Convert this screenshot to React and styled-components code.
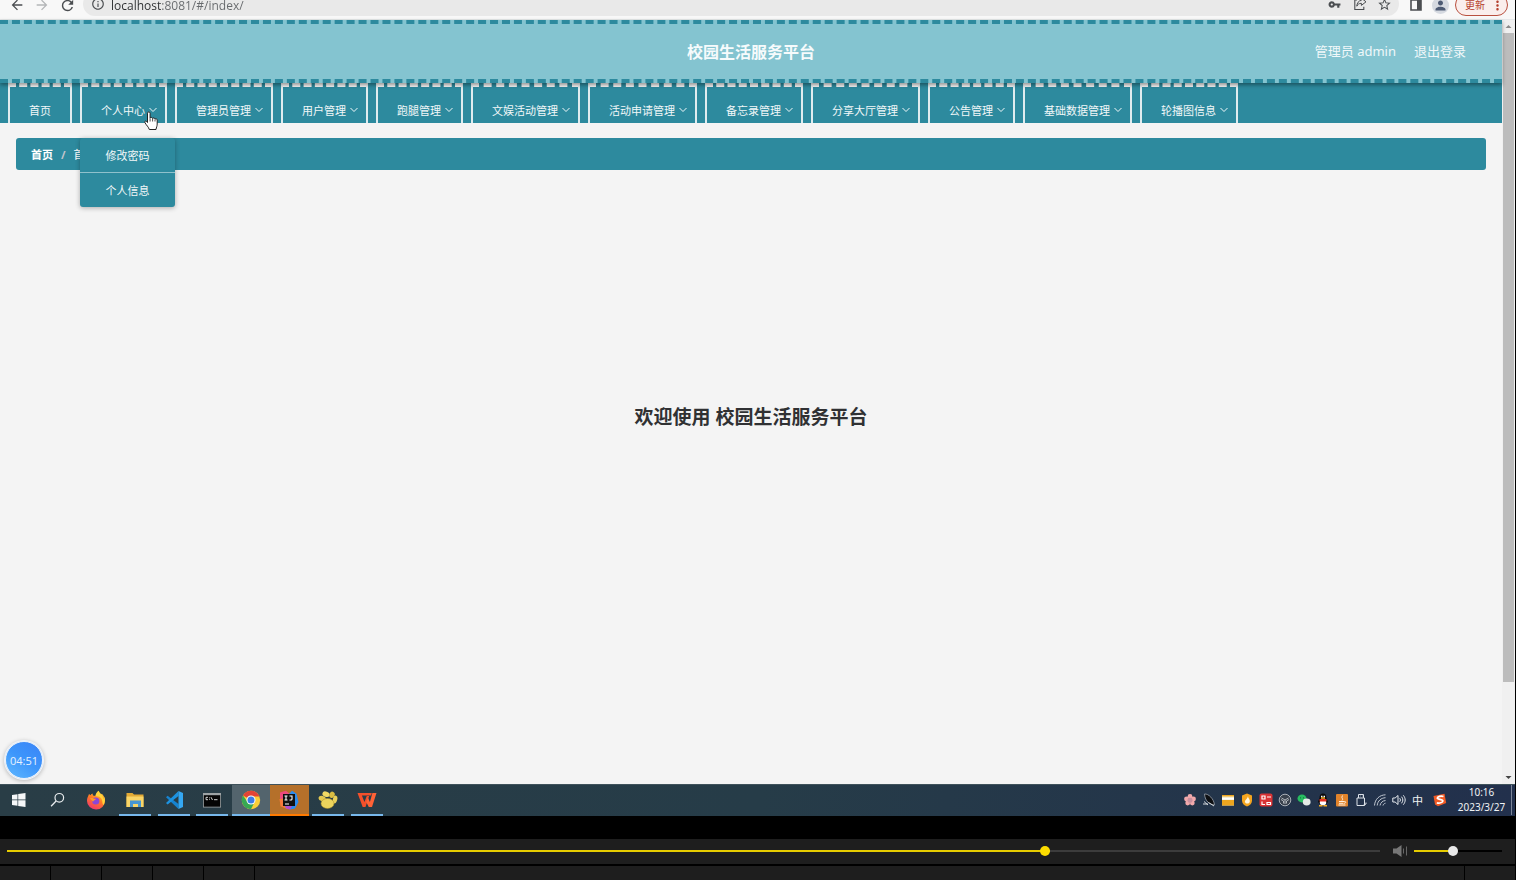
import React from "react";
import styled, { createGlobalStyle, css } from "styled-components";
import {
  MdArrowBack,
  MdArrowForward,
  MdRefresh,
  MdInfoOutline,
  MdVpnKey,
  MdStarBorder,
  MdPerson,
  MdMoreVert,
} from "react-icons/md";

const teal = "#2d8a9e";
const lightTeal = "#84c4d0";
const uiFont = `"Open Sans", "Noto Sans CJK SC", sans-serif`;

const GlobalStyle = createGlobalStyle`
  *, *::before, *::after { box-sizing: border-box; }
  body {
    margin: 0;
    background: #000;
    font-family: "Noto Sans", "Noto Sans CJK SC", sans-serif;
    font-size: 11px;
  }
  button, input { font: inherit; }
  button { border: 0; padding: 0; background: none; color: inherit; }
  a { color: inherit; text-decoration: none; }
  ul, ol { list-style: none; margin: 0; padding: 0; }
  svg { display: block; flex: none; }
`;

const Screen = styled.div`
  min-height: 100vh;
  display: flex;
  flex-direction: column;
`;

const Desktop = styled.div`
  flex: 1;
  display: flex;
  flex-direction: column;
  margin-right: 1px;
`;

/* Browser toolbar */

const Toolbar = styled.div`
  height: 20px;
  overflow: hidden;
  display: flex;
  align-items: flex-end;
  background: #f8f8f8;
  border-bottom: 1px solid #e4e8e9;
`;

const ToolbarRow = styled.div`
  flex: 1;
  height: 28px;
  display: flex;
  align-items: center;
  padding: 0 7px 0 8px;
  color: #4b4e51;
`;

const ToolButton = styled.button`
  width: ${(p) => p.$width || 25}px;
  height: 24px;
  display: flex;
  align-items: center;
  justify-content: center;
  color: ${(p) => (p.$muted ? "#b4b6b8" : "inherit")};
`;

const AddressBar = styled.div`
  flex: 1;
  height: 24px;
  margin: 0 4px 2px 6px;
  padding: 0 2px 0 8px;
  border-radius: 12px;
  background: #e9e9e9;
  display: flex;
  align-items: center;
  gap: 6px;
`;

const AddressInput = styled.input`
  flex: 1;
  min-width: 0;
  height: 20px;
  padding: 2px 0 0;
  border: 0;
  outline: 0;
  font-family: ${uiFont};
  font-size: 12px;
  color: #55585b;
  background: linear-gradient(90deg, #2c2e30 50px, #66696c 50px);
  background-clip: text;
  -webkit-text-fill-color: transparent;
`;

const Avatar = styled.span`
  width: 17px;
  height: 17px;
  border-radius: 50%;
  background: #d5d9e0;
  color: #4d5a73;
  display: flex;
  align-items: center;
  justify-content: center;
`;

const UpdateButton = styled.button`
  width: 53px;
  height: 22px;
  margin-left: 2px;
  padding: 0 2px 0 9px;
  border: 1px solid #b9503f;
  border-radius: 11px;
  background: #faeeec;
  color: #b5402e;
  font-size: 10px;
  line-height: 10px;
  display: flex;
  align-items: center;
  justify-content: space-between;
`;

/* Page inside the browser */

const Viewport = styled.div`
  flex: 1;
  display: flex;
  position: relative;
  background: #f4f4f4;
`;

const Page = styled.div`
  flex: 1;
  min-width: 0;
  display: flex;
  flex-direction: column;
`;

const Header = styled.header`
  position: relative;
  z-index: 1;
  height: 63px;
  padding: 0 36px 2px;
  border: 0 dashed ${teal};
  border-width: 4px 0;
  background: ${lightTeal};
  box-shadow: 0 2px 4px rgba(0, 0, 0, 0.4);
  color: #fff;
  display: grid;
  grid-template-columns: 1fr auto 1fr;
  align-items: center;
`;

const Title = styled.h1`
  grid-column: 2;
  margin: 0;
  font-size: 16px;
  font-weight: 700;
  color: #f6fbfc;
`;

const UserArea = styled.div`
  display: flex;
  justify-content: flex-end;
  gap: 18px;
  font-size: 13px;
  color: #f0f8fa;
`;

const Nav = styled.nav`
  background: ${teal};
  padding: 0 8px;
`;

const NavList = styled.ul`
  display: flex;
  gap: 8px;
`;

const NavItem = styled.li`
  position: relative;
`;

const NavLink = styled.a`
  height: 40px;
  padding: 9px ${(p) => (p.$plain ? 19 : 8)}px 0 19px;
  border: 2px solid #dfecef;
  border-top: 4px dashed #f4f4f4;
  border-bottom: 0;
  display: flex;
  align-items: center;
  gap: 4px;
  color: #f2f8f9;
  white-space: nowrap;
`;

const Submenu = styled.ul`
  position: absolute;
  z-index: 2;
  top: 55px;
  left: 0;
  width: 95px;
  border-radius: 3px;
  background: ${teal};
  box-shadow: 0 1px 5px rgba(0, 0, 0, 0.3);
`;

const SubmenuLink = styled.a`
  height: ${(p) => (p.$last ? 34 : 35)}px;
  display: flex;
  align-items: center;
  justify-content: center;
  color: #f2f8f9;
  border-bottom: ${(p) => (p.$last ? "0" : "1px solid #8fc1cc")};
`;

const Pointer = styled.svg`
  position: absolute;
  z-index: 3;
  top: 28px;
  left: 63px;
`;

const Breadcrumb = styled.ol`
  margin: 15px 16px 0;
  height: 32px;
  padding: 0 15px;
  border-radius: 3px;
  background: ${teal};
  color: #fff;
  font-weight: 700;
  display: flex;
  align-items: center;
  gap: 8px;
`;

const Crumb = styled.li`
  font-weight: ${(p) => (p.$current ? 400 : 700)};
  color: ${(p) => (p.$separator ? "#c0c4cc" : "#fff")};
`;

const Main = styled.main`
  flex: 1;
  display: flex;
  justify-content: center;
  align-items: flex-start;
  padding-top: 233px;
`;

const Welcome = styled.h2`
  margin: 0;
  font-size: 19px;
  line-height: 28px;
  font-weight: 700;
  color: #303133;
`;

const Scrollbar = styled.div`
  width: 13px;
  display: flex;
  flex-direction: column;
  align-items: center;
  background: #f0f0f0;
`;

const ScrollArrow = styled.button`
  width: 13px;
  height: 13px;
  display: flex;
  align-items: center;
  justify-content: center;
`;

const ScrollTrack = styled.div`
  flex: 1;
  width: 11px;
`;

const ScrollThumb = styled.div`
  height: 88%;
  background: #bcbcbc;
`;

const Timer = styled.div`
  position: absolute;
  left: 5px;
  bottom: 5px;
  width: 38px;
  height: 38px;
  border: 1px solid #e8f1fc;
  border-radius: 50%;
  background: linear-gradient(35deg, #5fb8ff, #3d96fb 50%, #3a83f7);
  box-shadow: 0 0 0 1px #eef3fa, 0 1px 4px 1px rgba(0, 0, 0, 0.25);
  font-family: ${uiFont};
  color: #e6f2ff;
  display: flex;
  align-items: center;
  justify-content: center;
`;

/* Windows taskbar */

const Taskbar = styled.div`
  height: 32px;
  display: flex;
  justify-content: space-between;
  background: linear-gradient(90deg, #293d46, #263c48 50%, #22304c);
  border-top: 1px solid #3f525b;
  color: #f1f3f5;
`;

const AppList = styled.div`
  display: flex;
  width: 386px;
`;

const AppButton = styled.button`
  flex: 1;
  display: flex;
  flex-direction: column;
  align-items: center;
  justify-content: space-between;
  padding-top: 5px;
  ${(p) => p.$tone === "active" && css`background: #53646d;`}
  ${(p) => p.$tone === "alert" && css`background: #b5702a;`}

  &::after {
    content: "";
    height: 2px;
    width: ${(p) => (p.$tone ? "100%" : "32px")};
    background: ${(p) => (p.$tone === "alert" ? "#ff7a00" : p.$running ? "#77b8ec" : "transparent")};
  }
`;

const Tray = styled.div`
  display: flex;
  padding-bottom: 1px;
`;

const TrayButton = styled.button`
  width: ${(p) => (p.$wide ? 25 : 19)}px;
  display: flex;
  align-items: center;
  justify-content: center;
`;

const Clock = styled.button`
  width: 60px;
  border-right: 1px solid #7b8598;
  margin-right: 3px;
  font-size: 10px;
  line-height: 15px;
`;

/* Video player controls */

const Player = styled.div`
  margin: 23px 1px 0 0;
  background: #1e1e1e;
  height: 25px;
  display: flex;
  align-items: center;
  padding: 0 13px 1px 7px;
`;

const Slider = styled.input`
  appearance: none;
  margin: 0;
  height: 12px;
  background: transparent;
  ${(p) => (p.$fixed ? "width: 88px;" : "flex: 1; min-width: 0;")}

  &::-webkit-slider-runnable-track {
    height: 2px;
    background: linear-gradient(90deg, #e6cc00 ${(p) => p.$fill}%, ${(p) => p.$rest} ${(p) => p.$fill}%);
  }
  &::-webkit-slider-thumb {
    appearance: none;
    width: 10px;
    height: 10px;
    margin-top: -4px;
    border-radius: 50%;
    background: ${(p) => p.$knob};
  }
`;

const MuteButton = styled.button`
  margin: 0 7px 0 13px;
`;

const Controls = styled.div`
  height: 14px;
  margin-top: 2px;
  display: flex;
  background: #1e1e1e;
`;

const ControlCell = styled.div`
  width: 51px;
  border-right: 1px solid #000;
  ${(p) => p.$grow && css`flex: 1;`}
`;

const Icon = ({ size = 20, box = 20, children }) => (
  <svg width={size} height={size} viewBox={`0 0 ${box} ${box}`} fill="none" aria-hidden="true">
    {children}
  </svg>
);

const Chevron = () => (
  <Icon size={8} box={8}>
    <path d="M.5 2 4 5.500 7.500 2" stroke="#f2f8f9" strokeWidth="1" />
  </Icon>
);

const ShareIcon = () => (
  <Icon size={14} box={14}>
    <path d="M4 3H1.8v9.5h9V9.8" stroke="currentColor" strokeWidth="1.1" />
    <path d="M8.4 1.2 13 4.8 8.4 8.4V6.3C6 6.3 4.7 7.4 3.8 9.2 4 6 5.6 3.7 8.4 3.3Z" stroke="currentColor" strokeLinejoin="round" />
  </Icon>
);

const PanelIcon = () => (
  <Icon size={12} box={12}>
    <path d="M1 1h10v10H1z" stroke="currentColor" strokeWidth="1.6" />
    <path d="M7 1h4v10H7z" fill="currentColor" />
  </Icon>
);

const apps = [
  {
    name: "开始",
    icon: (
      <path d="M3 5 8.500 4.200v5.400H3zM9.200 4.100 16.500 3v6.600H9.200zM3 10.300h5.500v5.400L3 15zM9.200 10.300h7.300V17l-7.300-1.100z" fill="#f5f7f8" />
    ),
  },
  {
    name: "搜索",
    icon: (
      <>
        <circle cx="11.3" cy="7.8" r="4.3" stroke="#e8ecee" strokeWidth="1.2" />
        <path d="m8.1 11-5 5.2" stroke="#e8ecee" strokeWidth="1.3" />
      </>
    ),
  },
  {
    name: "Firefox",
    icon: (
      <>
        <path d="M2 6.5 3 4l1.5 1.2C5.5 4 6 3.8 6.5 3.6l.5 2L9.5 6c.2-2.500 2-4.400 3.400-5.300.2 1.800 1 2.400 2.300 3.500l.7-.4c2.200 2.300 3.200 4.700 3.100 7A9 8.700 0 0 1 1 11c0-1.800.3-3.200 1-4.500Z" fill="url(#fox)" />
        <path d="M12.900.7c.2 1.800 1 2.400 2.300 3.500 1.500 1.600 2 3.200 1.800 5 1-.8 1.100-1.800 1-2.600 1.500 3 1.200 6.200-.5 8.400-1.600-1.500-.5-4.200-2.600-7-1.300-1.600-3.900-1.700-5.400-2C9.700 3.500 11.500 1.600 12.900.7Z" fill="#ffd43a" />
        <circle cx="9.800" cy="11" r="3.600" fill="#8b46d8" />
        <path d="M4 8.300c2.200-1 3.500.5 6 .4-.6 1.700-2.600 1.300-2.900 3-.8-.9-1.900-1.500-3.100-3.400Z" fill="#ff9a28" />
        <defs>
          <linearGradient id="fox" x1="14" y1="2" x2="5" y2="19" gradientUnits="userSpaceOnUse">
            <stop stopColor="#ffc63a" />
            <stop offset=".45" stopColor="#ff7a24" />
            <stop offset="1" stopColor="#f03372" />
          </linearGradient>
        </defs>
      </>
    ),
  },
  {
    name: "文件资源管理器",
    running: true,
    icon: (
      <>
        <path d="M1.500 3h6l1.500 1.500h9.500V17h-17z" fill="#e2aa35" />
        <path d="M1.500 6.500h17V17h-17z" fill="#f9d567" />
        <path d="M5 17v-6.500h11V17h-3v-3H8v3z" fill="#4796d2" />
      </>
    ),
  },
  {
    name: "Visual Studio Code",
    running: true,
    icon: (
      <>
        <path d="M2 7.200l1.600-1.500L14.500 14v5z" fill="#1683cf" />
        <path d="M14.500 1v5L3.600 14.500 2 13z" fill="#1c92e0" />
        <path d="m14.500 1 4.500 2v14l-4.500 2z" fill="#35a7f1" />
      </>
    ),
  },
  {
    name: "命令提示符",
    running: true,
    icon: (
      <>
        <path d="M1 3h18v14.500H1z" fill="#9da3a5" />
        <path d="M1.800 5.200h16.400v11.500H1.800z" fill="#050505" />
        <path d="M6 7.300H4v2.400h2M7.500 7.500v.8m0 1v.7M9 7.200l1.500 2.800M12 9.700h3.500" stroke="#e4e6e6" strokeWidth=".9" />
      </>
    ),
  },
  {
    name: "Google Chrome",
    running: true,
    tone: "active",
    icon: (
      <>
        <circle cx="10" cy="10" r="9.200" fill="#f9cf38" />
        <path d="M10 10 2 5.400A9.200 9.200 0 0 1 18 5.500L18.500 6.500H10Z" fill="#e24436" />
        <path d="M2 5.400A9.200 9.200 0 0 0 10 19.200L13.500 12 10 10 6.500 12Z" fill="#37a853" />
        <circle cx="10" cy="10" r="4.500" fill="#fff" />
        <circle cx="10" cy="10" r="3.500" fill="#3c7de6" />
      </>
    ),
  },
  {
    name: "IntelliJ IDEA",
    running: true,
    tone: "alert",
    icon: (
      <>
        <path d="M1 2.500 7 .8l5 4.200-4 7-7-1z" fill="#ef4a7c" />
        <path d="M.5 9 9 8v11.200l-7.500-3z" fill="#f77a3c" />
        <path d="m13 .8 4.500 3L19.500 12l-3.500 6.500-5 1-5-2.500L10 4z" fill="#2a8cf0" />
        <path d="m6 15 7 1-2 3.500-4-1z" fill="#b24bd0" />
        <path d="M4 4h12v12H4z" fill="#111" />
        <path d="M5.500 6h3M7 6v4M5.500 10h3M10.500 6H13v3c0 1-1 1.200-2.500 1M6 14h4" stroke="#fff" strokeWidth="1.100" />
      </>
    ),
  },
  {
    name: "Navicat",
    running: true,
    icon: (
      <>
        <ellipse cx="4.200" cy="8.500" rx="3.700" ry="2.600" transform="rotate(15 4.200 8.500)" fill="#e3c850" />
        <ellipse cx="8" cy="4.200" rx="3.700" ry="2.600" transform="rotate(20 8 4.200)" fill="#f0d965" />
        <ellipse cx="14" cy="4.800" rx="2.600" ry="3.200" transform="rotate(25 14 4.800)" fill="#dabd42" />
        <ellipse cx="17" cy="9.500" rx="2.200" ry="4" transform="rotate(15 17 9.500)" fill="#e9d05a" />
        <ellipse cx="9.500" cy="13.500" rx="6.500" ry="5" fill="#ecd45c" stroke="#a98c26" strokeWidth=".5" />
      </>
    ),
  },
  {
    name: "WPS Office",
    running: true,
    icon: (
      <>
        <path d="M.5 3h14.300l-.7 2.500H4.900l2.500 6.500L9.800 6h2.400L8.500 17H5.700z" fill="#f4502b" />
        <path d="m9.200 12 1.700-4.500 2 4.500 2.500-9h4.100L15 17h-3.200z" fill="#ff6236" />
      </>
    ),
  },
];

const tray = [
  {
    name: "花瓣",
    icon: (
      <>
        <g fill="#f1a9ab">
          <circle cx="7" cy="3.500" r="2.400" />
          <circle cx="10.500" cy="6" r="2.400" />
          <circle cx="9.300" cy="10" r="2.400" />
          <circle cx="4.700" cy="10" r="2.400" />
          <circle cx="3.500" cy="6" r="2.400" />
        </g>
        <circle cx="7" cy="7.200" r="2.500" fill="#c98f9f" />
      </>
    ),
  },
  {
    name: "录屏",
    icon: (
      <>
        <path d="M2.500 1c4-.5 9.500 5 10 11-4-.5-9.500-3-10-11Z" fill="#0d0f12" stroke="#9aa1aa" strokeWidth=".8" />
        <path d="m2 8.500 4 3.500M1 11h5M6.500 9.500 12 13" stroke="#d4d8dc" />
      </>
    ),
  },
  {
    name: "窗口",
    icon: (
      <>
        <path d="M1 2h12v10.500H1z" fill="#f7edcf" />
        <path d="M1 2h12v1.500H1zM1 7h12v5.500H1z" fill="#eca51f" />
        <path d="M1 5h12v1.500H1z" fill="#fff" />
      </>
    ),
  },
  {
    name: "安全",
    icon: (
      <>
        <path d="m7 .5 5 2v5c0 3-2 5-5 6-3-1-5-3-5-6v-5z" fill="#f4a51f" />
        <path d="M8 3c0 2.500 2.500 3.500 1.700 6C9 11 5.500 11 5 9c-.5-2 2.500-3 3-6Z" fill="#fff5dc" />
      </>
    ),
  },
  {
    name: "笔记",
    icon: (
      <>
        <rect x=".5" y=".5" width="13" height="13" rx="2" fill="#d83335" />
        <path d="M3 3h3v3H3zM8 4h4M8 9.500h3.500v2H8zM3 8.500v3h3" stroke="#fff" strokeWidth="1.200" />
      </>
    ),
  },
  {
    name: "代理",
    icon: (
      <>
        <circle cx="7" cy="7" r="5.800" fill="#39414d" stroke="#aab0b7" />
        <path d="M7 11V7L3.500 5M7 7l3.500-2M5.500 10.500V8L3 6.500M8.500 10.500V8L11 6.500" stroke="#d0d4d8" strokeWidth=".8" />
      </>
    ),
  },
  {
    name: "微信",
    icon: (
      <>
        <ellipse cx="5" cy="5.500" rx="4.500" ry="3.900" fill="#27bd60" />
        <ellipse cx="9.700" cy="9" rx="3.900" ry="3.400" fill="#e4e9e6" />
        <path d="M3.500 4.500v.8M6.500 4.500v.8" stroke="#134f2b" />
      </>
    ),
  },
  {
    name: "QQ",
    icon: (
      <>
        <path d="M7 .5C4.500.5 3.500 2.500 3.500 5L2 9l2 2h6l2-2-1.500-4c0-2.500-1-4.500-3.500-4.500Z" fill="#0a0a0b" />
        <ellipse cx="7" cy="9.500" rx="3.200" ry="2.800" fill="#fff" />
        <path d="M3.500 6h7v2.500h-7z" fill="#e33124" />
        <path d="M5 3.500h1.500M7.500 3.500H9" stroke="#fff" strokeWidth="1.500" />
        <path d="M5 5h4M3 12.700h3.500M7.500 12.700H11" stroke="#f3ac26" strokeWidth="1.400" />
      </>
    ),
  },
  {
    name: "Java",
    icon: (
      <>
        <rect x="1" y="1" width="12" height="12.500" rx="1" fill="#e1832b" />
        <path d="M8 2.500C5 4.500 9 5.500 7 7.500M4 8.500h5.500c2-.2 1.500 1.800-.5 1.800M4 10.300h4.500M3.500 12h7" stroke="#fff1df" />
      </>
    ),
  },
  {
    name: "弹出设备",
    icon: <path d="M4.500 5V1.500h5V5M3 5h7.500v7.500H3zM6 3h.5M8 3h.5M9 12.500l3-1.500v-1.500" stroke="#dce1e8" />,
  },
  {
    name: "网络",
    icon: (
      <path
        d="M1.500 12.500C2 6 6.500 2 12.500 1.800M4.200 12.500c.5-4.700 3.800-7.500 8.300-7.800M7 12.500c.5-2.800 2.500-4.700 5.500-5M10 12.500c.3-1.200 1.200-2 2.500-2.300"
        stroke="#c0c7d1"
        strokeWidth="1"
      />
    ),
  },
  {
    name: "音量",
    icon: (
      <path
        d="M.8 5h2.300L6 2.500v9L3.100 9H.8zM7.700 5.200c.9 1 .9 2.600 0 3.600M9.500 3.700c1.800 2 1.800 4.600 0 6.600M11.300 2.300c2.500 3 2.500 6.400 0 9.400"
        stroke="#e6eaef"
        strokeWidth="1"
      />
    ),
  },
];

const SogouIcon = () => (
  <Icon size={14} box={14}>
    <path d="m.5 3 11-2.200L13.200 10 5 13.200 2 11.500z" fill="#f15a24" />
    <path d="M10.500 3.500C8 2.800 4.500 3.500 4.300 5 4.200 6.600 10 6 9.900 8 9.700 9.800 6.500 10.400 3.800 9.800" stroke="#fff" strokeWidth="1.700" />
  </Icon>
);

const menu = [
  { label: "首页", plain: true },
  { label: "个人中心", open: true, children: ["修改密码", "个人信息"] },
  { label: "管理员管理" },
  { label: "用户管理" },
  { label: "跑腿管理" },
  { label: "文娱活动管理" },
  { label: "活动申请管理" },
  { label: "备忘录管理" },
  { label: "分享大厅管理" },
  { label: "公告管理" },
  { label: "基础数据管理" },
  { label: "轮播图信息" },
];

const HandPointer = () => (
  <Pointer width="16" height="20" viewBox="0 0 16 20" aria-hidden="true">
    <path
      d="M4.500 11.500V2.200c0-1.800 2.600-1.800 2.600 0v5c.3-1.200 2.400-1 2.500.4.500-1 2.300-.8 2.400.6.600-.8 2.200-.5 2.200.9v4c0 2-.8 3-1.200 5.400H6.300C5.600 15.900 3.500 14.500 2 11.800c-1-1.700.8-2.600 2.500-.3Z"
      fill="#fff"
      stroke="#222"
      strokeWidth="1"
      strokeLinejoin="round"
    />
    <path d="M7.100 7.500v3M9.600 8v2.500M12 8.500v2" stroke="#222" strokeWidth=".8" />
  </Pointer>
);

function BrowserToolbar() {
  return (
    <Toolbar>
      <ToolbarRow>
        <ToolButton $width={17} aria-label="后退"><MdArrowBack size={16} /></ToolButton>
        <ToolButton $width={33} $muted aria-label="前进"><MdArrowForward size={16} /></ToolButton>
        <ToolButton $width={19} aria-label="刷新"><MdRefresh size={17} /></ToolButton>
        <AddressBar>
          <MdInfoOutline size={14} />
          <AddressInput aria-label="地址" defaultValue="localhost:8081/#/index/" />
          <ToolButton aria-label="密码"><MdVpnKey size={13} /></ToolButton>
          <ToolButton $width={13} aria-label="分享"><ShareIcon /></ToolButton>
          <ToolButton aria-label="收藏"><MdStarBorder size={15} /></ToolButton>
        </AddressBar>
        <ToolButton aria-label="侧边栏"><PanelIcon /></ToolButton>
        <ToolButton aria-label="用户"><Avatar><MdPerson size={15} /></Avatar></ToolButton>
        <UpdateButton>更新<MdMoreVert size={15} /></UpdateButton>
      </ToolbarRow>
    </Toolbar>
  );
}

function MainNav() {
  return (
    <Nav>
      <NavList>
        {menu.map((item) => (
          <NavItem key={item.label}>
            <NavLink href="#/index" $plain={item.plain}>
              {item.label}
              {!item.plain && <Chevron />}
            </NavLink>
            {item.open && (
              <>
                <Submenu>
                  {item.children.map((child, i) => (
                    <li key={child}>
                      <SubmenuLink href="#/index" $last={i === item.children.length - 1}>{child}</SubmenuLink>
                    </li>
                  ))}
                </Submenu>
                <HandPointer />
              </>
            )}
          </NavItem>
        ))}
      </NavList>
    </Nav>
  );
}

function WindowsTaskbar() {
  return (
    <Taskbar>
      <AppList>
        {apps.map((app) => (
          <AppButton key={app.name} aria-label={app.name} $running={app.running} $tone={app.tone}>
            <Icon size={20}>{app.icon}</Icon>
          </AppButton>
        ))}
      </AppList>
      <Tray>
        {tray.map((item) => (
          <TrayButton key={item.name} aria-label={item.name}>
            <Icon size={14} box={14}>{item.icon}</Icon>
          </TrayButton>
        ))}
        <TrayButton>中</TrayButton>
        <TrayButton $wide aria-label="搜狗输入法"><SogouIcon /></TrayButton>
        <Clock>10:16<br />2023/3/27</Clock>
      </Tray>
    </Taskbar>
  );
}

export default function App() {
  return (
    <Screen>
      <GlobalStyle />
      <Desktop>
        <BrowserToolbar />
        <Viewport>
          <Page>
            <Header>
              <Title>校园生活服务平台</Title>
              <UserArea>
                <span>管理员 admin</span>
                <button>退出登录</button>
              </UserArea>
            </Header>
            <MainNav />
            <Breadcrumb>
              <Crumb><a href="#/index">首页</a></Crumb>
              <Crumb $separator aria-hidden="true">/</Crumb>
              <Crumb $current>首页</Crumb>
            </Breadcrumb>
            <Main>
              <Welcome>欢迎使用 校园生活服务平台</Welcome>
            </Main>
          </Page>
          <Scrollbar>
            <ScrollArrow aria-label="向上滚动">
              <Icon size={7} box={7}><path d="M.5 5 3.500 2l3 3z" fill="#8a8a8a" /></Icon>
            </ScrollArrow>
            <ScrollTrack><ScrollThumb /></ScrollTrack>
            <ScrollArrow aria-label="向下滚动">
              <Icon size={7} box={7}><path d="M.5 2 3.500 5l3-3z" fill="#444" /></Icon>
            </ScrollArrow>
          </Scrollbar>
          <Timer>04:51</Timer>
        </Viewport>
        <WindowsTaskbar />
      </Desktop>
      <Player>
        <Slider type="range" aria-label="播放进度" max="1000" defaultValue="758" $fill={76} $rest="#3c3c3c" $knob="#fcdc00" />
        <MuteButton aria-label="静音">
          <Icon size={14} box={14}>
            <path d="M0 4.500h3.500L8.500 1v12l-5-3.500H0z" fill="#777" />
            <path d="M10.500 4.500v5M13.500 2.500v9" stroke="#666" />
          </Icon>
        </MuteButton>
        <Slider type="range" aria-label="播放音量" defaultValue="44" $fixed $fill={44} $rest="#000" $knob="#e8e8e8" />
      </Player>
      <Controls>
        {[1, 2, 3, 4, 5].map((n) => <ControlCell key={n} />)}
        <ControlCell $grow />
        <ControlCell />
      </Controls>
    </Screen>
  );
}
